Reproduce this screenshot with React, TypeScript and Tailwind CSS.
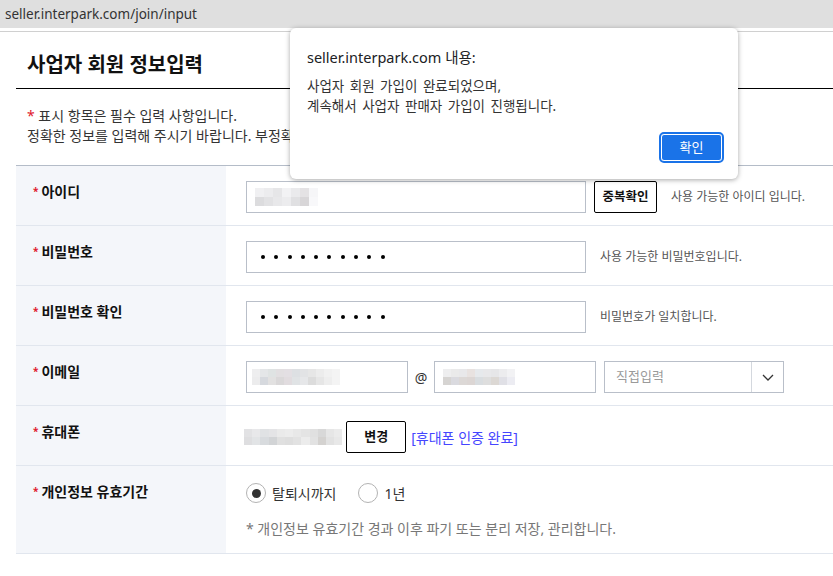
import React from 'react';

const idCells = [
  '#f0f0f2', '#ececee', '#e6e6e8', '#f2f2f4', '#eaeaec', '#e4e2e4', '#f6f6f8',
  '#dcdcde', '#e2e2e4', '#e8e8ea', '#ececee', '#e0e0e2', '#d8d6d8', '#f8f8fa',
];
const mailCells = [
  '#eeeeef', '#e4e6e8', '#dfe3e3', '#e2dfe1', '#e3dfe3', '#dde0e3', '#e2e3e5', '#e6e6e6', '#ececec', '#f1f1f1', '#f4f4f4',
  '#ececed', '#d6d9de', '#e2e1e1', '#dad8d9', '#e1dcdf', '#e0e3e5', '#e6e7e9', '#dcdcdc', '#e6e6e6', '#eeeeee', '#f4f4f4',
];
const domainCells = [
  '#eeeeef', '#eaeaea', '#e8e8ea', '#e8e2e0', '#e6e9ec', '#e8e8ea', '#e6e6e8', '#ececee', '#f2f2f4',
  '#d6d4d2', '#dadadf', '#dcd8d6', '#dcd6d4', '#d9dde0', '#dedede', '#dcd8d4', '#e0e0e6', '#ececf2',
];
const phoneCells = [
  '#e2e2e4', '#e8e8ea', '#e0e2e4', '#e4e4e6', '#eaeaea', '#ececec', '#e8e8e8', '#e4e4e4', '#e0e0e0', '#d8d8d8', '#e6e6e6', '#ebebeb',
  '#dedee0', '#e2e4e6', '#d8dbde', '#d2d4d6', '#e0e0e0', '#dedede', '#e2e2e2', '#ececec', '#e2e2e2', '#d4d2d0', '#e2e2e2', '#e8e8e8',
];

function Mosaic({ cells, cols, cell }: { cells: string[]; cols: number; cell: number }) {
  return (
    <div className="grid shrink-0" style={{ gridTemplateColumns: `repeat(${cols}, ${cell}px)`, gridAutoRows: `${cell}px` }}>
      {cells.map((c, i) => (
        <div key={i} style={{ backgroundColor: c }} />
      ))}
    </div>
  );
}

function Dots() {
  return (
    <div className="flex items-center gap-[9.3px]">
      {Array.from({ length: 10 }).map((_, i) => (
        <span key={i} className="w-[4px] h-[4px] rounded-full bg-black" />
      ))}
    </div>
  );
}

function Label({ children }: { children: React.ReactNode }) {
  return (
    <div className="w-[210px] shrink-0 bg-[#f4f6fa] pl-[17px] pt-[16px]">
      <div className="flex items-center text-[14px] leading-[20px] font-bold text-[#111]">
        <span className="text-[#e0182d] text-[10px] mr-[3px] -mt-[2px]">*</span>
        {children}
      </div>
    </div>
  );
}

function Radio({ checked }: { checked?: boolean }) {
  return (
    <span className="w-[20px] h-[20px] rounded-full border border-[#b3b3b3] bg-white flex items-center justify-center shrink-0">
      {checked && <span className="w-[9px] h-[9px] rounded-full bg-[#333]" />}
    </span>
  );
}

export default function App() {
  return (
    <div className="relative w-[833px] h-[576px] overflow-hidden bg-white font-['Noto_Sans','Noto_Sans_CJK_KR',sans-serif] text-[#333]">
      {/* address bar */}
      <div className="h-[28px] bg-[#dfdfdf] pl-[5px] flex items-center text-[13.5px] text-[#333]">
        seller.interpark.com/join/input
      </div>
      <div className="h-[3px]" />
      <div className="border-t border-[#d0d0d0]" />

      <div className="pl-[16px]">
        {/* title */}
        <div className="pt-[20px] pb-[10px] pl-[11px] border-b border-black">
          <h1 className="text-[20px] leading-[26px] font-bold text-[#111]">사업자 회원 정보입력</h1>
        </div>

        <div className="pl-[11px] mt-[17px] mb-[19px] text-[14px] leading-[20px] text-[#333]">
          <p>
            <span className="text-[#e0182d]">*</span> 표시 항목은 필수 입력 사항입니다.
          </p>
          <p>정확한 정보를 입력해 주시기 바랍니다. 부정확한 정보 입력 시 서비스 이용이 제한될 수 있습니다.</p>
        </div>

        {/* form table */}
        <div className="border-t border-[#b4bcc8]">
          <div className="flex h-[60px] border-b border-[#e1e6ee]">
            <Label>아이디</Label>
            <div className="flex-1 pl-[20px] pt-[15px] flex items-start">
              <div className="w-[340px] h-[32px] border border-[#b9bfc9] flex items-center pl-[8px]">
                <Mosaic cells={idCells} cols={7} cell={9} />
              </div>
              <button className="ml-[8px] w-[63px] h-[32px] border border-black rounded-[2px] bg-white text-[12.5px] font-bold text-[#111]">
                중복확인
              </button>
              <span className="ml-[14px] h-[32px] flex items-center text-[12px] text-[#555]">사용 가능한 아이디 입니다.</span>
            </div>
          </div>

          <div className="flex h-[60px] border-b border-[#e1e6ee]">
            <Label>비밀번호</Label>
            <div className="flex-1 pl-[20px] pt-[15px] flex items-start">
              <div className="w-[340px] h-[32px] border border-[#b9bfc9] flex items-center pl-[14px]">
                <Dots />
              </div>
              <span className="ml-[14px] h-[32px] flex items-center text-[12px] text-[#555]">사용 가능한 비밀번호입니다.</span>
            </div>
          </div>

          <div className="flex h-[60px] border-b border-[#e1e6ee]">
            <Label>비밀번호 확인</Label>
            <div className="flex-1 pl-[20px] pt-[15px] flex items-start">
              <div className="w-[340px] h-[32px] border border-[#b9bfc9] flex items-center pl-[14px]">
                <Dots />
              </div>
              <span className="ml-[14px] h-[32px] flex items-center text-[12px] text-[#555]">비밀번호가 일치합니다.</span>
            </div>
          </div>

          <div className="flex h-[60px] border-b border-[#e1e6ee]">
            <Label>이메일</Label>
            <div className="flex-1 pl-[20px] pt-[15px] flex items-start">
              <div className="w-[162px] h-[32px] border border-[#b9bfc9] flex items-center pl-[5px]">
                <Mosaic cells={mailCells} cols={11} cell={8} />
              </div>
              <span className="w-[26px] h-[32px] flex items-center justify-center text-[14px] text-[#333]">@</span>
              <div className="w-[162px] h-[32px] border border-[#b9bfc9] flex items-center pl-[8px]">
                <Mosaic cells={domainCells} cols={9} cell={8} />
              </div>
              <div className="ml-[8px] w-[180px] h-[32px] border border-[#b9bfc9] flex">
                <span className="flex-1 flex items-center pl-[11px] text-[13px] text-[#9a9a9a]">직접입력</span>
                <span className="w-[32px] border-l border-[#d4d8de] flex items-center justify-center">
                  <svg width="12" height="7" viewBox="0 0 12 7" fill="none">
                    <polyline points="1,1 6,6 11,1" stroke="#333" strokeWidth="1.3" />
                  </svg>
                </span>
              </div>
            </div>
          </div>

          <div className="flex h-[60px] border-b border-[#e1e6ee]">
            <Label>휴대폰</Label>
            <div className="flex-1 pl-[18px] pt-[15px] flex items-start">
              <div className="h-[32px] flex items-center">
                <Mosaic cells={phoneCells} cols={12} cell={8.2} />
              </div>
              <button className="ml-[4px] w-[60px] h-[32px] border border-black rounded-[2px] bg-white text-[13px] font-bold text-[#111]">
                변경
              </button>
              <span className="ml-[5px] h-[32px] flex items-center text-[14px] text-[#4545ff]">[휴대폰 인증 완료]</span>
            </div>
          </div>

          <div className="flex h-[88px] border-b border-[#e1e6ee]">
            <Label>개인정보 유효기간</Label>
            <div className="flex-1 pl-[20px] pt-[17px]">
              <div className="flex items-center h-[20px] text-[14px] text-[#333]">
                <Radio checked />
                <span className="ml-[6px]">탈퇴시까지</span>
                <span className="ml-[22px]"><Radio /></span>
                <span className="ml-[6px]">1년</span>
              </div>
              <p className="mt-[16px] text-[14px] leading-[20px] text-[#777]">
                * 개인정보 유효기간 경과 이후 파기 또는 분리 저장, 관리합니다.
              </p>
            </div>
          </div>
        </div>
      </div>

      {/* alert dialog */}
      <div className="absolute left-[290px] top-[28px] w-[448px] h-[151px] bg-white rounded-[6px] shadow-[0_1px_5px_rgba(0,0,0,0.35)] pl-[17px] pr-[16px] pt-[19px]">
        <p className="text-[14.5px] leading-[20px] text-[#202124]">seller.interpark.com 내용:</p>
        <div className="mt-[9px] text-[13.5px] leading-[20px] text-[#333] [word-spacing:2px]">
          <p>사업자 회원 가입이 완료되었으며,</p>
          <p>계속해서 사업자 판매자 가입이 진행됩니다.</p>
        </div>
        <div className="mt-[18px] flex justify-end">
          <button className="w-[61px] h-[27px] rounded-[3px] bg-[#1a73e8] border border-white outline-2 outline-[#1a73e8] text-white text-[13px] leading-none">
            확인
          </button>
        </div>
      </div>
    </div>
  );
}
